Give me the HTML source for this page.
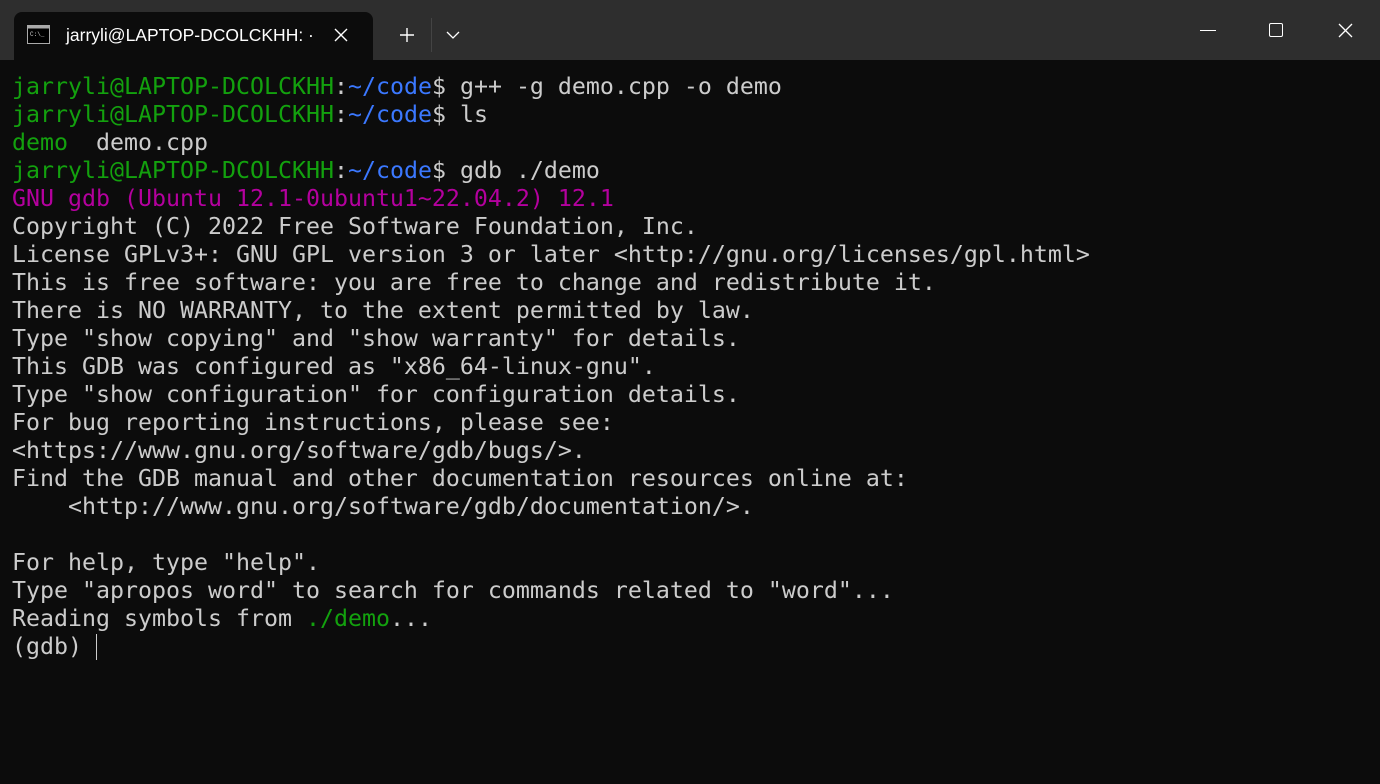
<!DOCTYPE html>
<html><head><style>
html,body{margin:0;padding:0;width:1380px;height:784px;overflow:hidden;background:#0c0c0c;}
.bar{position:absolute;left:0;top:0;width:1380px;height:60px;background:#2e2e2e;}
.tab{position:absolute;left:14px;top:12px;width:359px;height:48px;background:#0c0c0c;border-radius:8px 8px 0 0;}
.tt{position:absolute;left:66px;top:25px;font:17.5px "Liberation Sans",sans-serif;color:#fff;white-space:nowrap;}
.term{position:absolute;left:12px;top:73px;font:23.25px/28px "DejaVu Sans Mono","Liberation Mono",monospace;color:#cccccc;white-space:pre;margin:0;}
.g{color:#13a10e}.b{color:#3b78ff}.m{color:#b4009e}
</style></head><body>
<div class="bar"></div>
<div class="tab"></div>
<svg style="position:absolute;left:27px;top:25px" width="24" height="20"><rect x="0.5" y="0.5" width="22" height="18" fill="#000" stroke="#aaa"/><rect x="0.5" y="0.5" width="22" height="3" fill="#aaa"/><text x="3" y="11" font-size="6" fill="#ccc" font-family="Liberation Mono">C:\_</text></svg>
<div class="tt">jarryli@LAPTOP-DCOLCKHH: ·</div>
<svg style="position:absolute;left:334px;top:28px" width="14" height="14"><path d="M1 1L13 13M13 1L1 13" stroke="#fff" stroke-width="1.4"/></svg>
<svg style="position:absolute;left:400px;top:28px" width="14" height="14"><path d="M7 0V14M0 7H14" stroke="#fff" stroke-width="1.4"/></svg>
<div style="position:absolute;left:431px;top:18px;width:1px;height:34px;background:#444"></div>
<svg style="position:absolute;left:446px;top:31px" width="14" height="8"><path d="M1 1L7 7L13 1" stroke="#fff" stroke-width="1.3" fill="none"/></svg>
<div style="position:absolute;left:1200px;top:30px;width:16px;height:1px;background:#fff"></div>
<div style="position:absolute;left:1269px;top:23px;width:12px;height:12px;border:1.3px solid #fff;border-radius:2px"></div>
<svg style="position:absolute;left:1338px;top:23px" width="15" height="15"><path d="M1 1L14 14M14 1L1 14" stroke="#fff" stroke-width="1.3"/></svg>
<pre class="term"><span class="g">jarryli@LAPTOP-DCOLCKHH</span>:<span class="b">~/code</span>$ g++ -g demo.cpp -o demo
<span class="g">jarryli@LAPTOP-DCOLCKHH</span>:<span class="b">~/code</span>$ ls
<span class="g">demo</span>  demo.cpp
<span class="g">jarryli@LAPTOP-DCOLCKHH</span>:<span class="b">~/code</span>$ gdb ./demo
<span class="m">GNU gdb (Ubuntu 12.1-0ubuntu1~22.04.2) 12.1</span>
Copyright (C) 2022 Free Software Foundation, Inc.
License GPLv3+: GNU GPL version 3 or later &lt;http://gnu.org/licenses/gpl.html&gt;
This is free software: you are free to change and redistribute it.
There is NO WARRANTY, to the extent permitted by law.
Type "show copying" and "show warranty" for details.
This GDB was configured as "x86_64-linux-gnu".
Type "show configuration" for configuration details.
For bug reporting instructions, please see:
&lt;https://www.gnu.org/software/gdb/bugs/&gt;.
Find the GDB manual and other documentation resources online at:
    &lt;http://www.gnu.org/software/gdb/documentation/&gt;.

For help, type "help".
Type "apropos word" to search for commands related to "word"...
Reading symbols from <span class="g">./demo</span>...
(gdb) </pre>
<div style="position:absolute;left:96px;top:634px;width:1px;height:26px;background:#ccc"></div>
</body></html>
